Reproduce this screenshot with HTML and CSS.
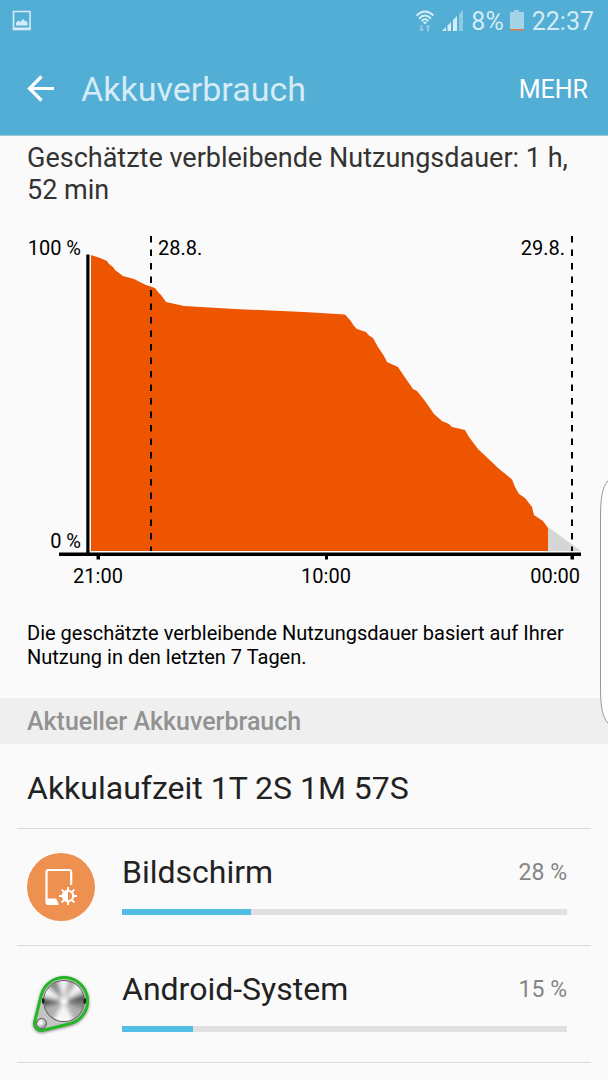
FILE: index.html
```html
<!DOCTYPE html>
<html lang="de">
<head>
<meta charset="utf-8">
<meta name="viewport" content="width=device-width, initial-scale=1">
<title>Akkuverbrauch</title>
<link rel="stylesheet" href="styles.css">
</head>
<body>
<header class="top">
  <div class="status">
    <svg class="status-picture" width="20" height="22" viewBox="0 0 20 22" aria-hidden="true">
      <path fill="none" stroke="#d5ebf5" stroke-width="1.6" d="M1.5 1.5h16.5v18H1.5z"/>
      <path fill="#d5ebf5" d="M1 17.500h17.500v2.500H1zM4 15.500v-2.500l2-2.500 2 1.500 3-3 2.500 2.500 1-.5 1 2v2.500z"/>
    </svg>
    <svg width="20" height="22" viewBox="0 0 20 22" aria-hidden="true">
      <g fill="none" stroke="#d5ebf5" stroke-width="1.9">
        <path d="M1.500 5.500Q10-2.500 18.500 5.500M4 8.500Q10 2.500 16 8.500M6.500 11Q10 7.500 13.500 11"/>
      </g>
      <path fill="#d5ebf5" d="M7.500 11.800h5L10 14.500z"/>
      <path fill="#8ec9e2" d="M5.500 15h2v4h2L6.500 21.500l-3-2.500h2zM12 21.500v-4h-2l3-3 3 3h-2v4z"/>
    </svg>
    <svg class="status-signal" width="22" height="22" viewBox="0 0 22 22" aria-hidden="true">
      <path fill="#8ec9e2" d="M17 4l4-4v21h-4z"/>
      <path fill="#d5ebf5" d="M0 21l4-4v4zM5.500 15.500l3.500-3.500v9H5.500zM11 10l4-4v15h-4z"/>
    </svg>
    <span class="status-text">8%</span>
    <svg class="status-battery" width="14" height="22" viewBox="0 0 14 22" aria-hidden="true">
      <path fill="#a5d4e8" d="M0 2h4V0h5v2h5v18H0z"/>
      <path fill="#e07d4d" d="M0 19h14v1.500H0z"/>
    </svg>
    <span class="status-text">22:37</span>
  </div>
  <div class="bar">
    <button class="back" type="button" aria-label="Zurück">
      <svg width="28" height="28" viewBox="0 0 28 28" aria-hidden="true"><path fill="none" stroke="#fff" stroke-width="3.200" d="M28 13.500H3M15.500 1.500L3.500 13.500l12 12"/></svg>
    </button>
    <h1 class="title">Akkuverbrauch</h1>
    <button class="more" type="button">MEHR</button>
  </div>
</header>
<main>
  <p class="estimate">Geschätzte verbleibende Nutzungsdauer: 1&nbsp;h, 52&nbsp;min</p>
  <svg class="chart" viewBox="0 0 608 380" role="img" aria-label="Akkustand im Zeitverlauf">
    <g transform="translate(0 -220)">
      <path fill="#d6d6d6" d="M548 527L581 551H548z"/>
      <path fill="#ed5500" d="M91 255L100 258L107 261L109 264L113 267L115 270L123 276L134 279L146 285L155 288L158 292L161 295L166 302L184 306L235 309L304 312L345 314.500L350 320L354 326L357 329L366 332L369 335.500L373 338L378 347L384 356L387 362L398 367L404 376L413 389L417 391L425 401L434 414L442 421L449 424L452 427L465 430L469 437L478 449L495 465L498 468L512 479.500L515 487L519 494L525 498L532 507L534 515L543 521L548 528V551H91z"/>
      <path class="day" d="M151 236V551M572 236V551"/>
      <path d="M86.300 254.500H89.500V552.500H581V556H574V559.500H570.500V556H328V559.500H325V556H100V559.500H96.500V556H59V552.500H86.300z"/>
      <text class="end" x="81" y="255">100 %</text>
      <text class="end" x="81" y="548">0 %</text>
      <text x="158" y="255">28.8.</text>
      <text class="end" x="565" y="255">29.8.</text>
      <text class="middle" x="98" y="583">21:00</text>
      <text class="middle" x="326" y="583">10:00</text>
      <text class="end" x="580" y="583">00:00</text>
    </g>
  </svg>
  <p class="note">Die geschätzte verbleibende Nutzungsdauer basiert auf Ihrer Nutzung in den letzten 7 Tagen.</p>
  <h2 class="section">Aktueller Akkuverbrauch</h2>
  <p class="runtime">Akkulaufzeit 1T 2S 1M 57S</p>
  <ul class="apps">
    <li class="app">
      <svg class="icon" width="68" height="68" viewBox="0 0 68 68" aria-hidden="true">
        <circle cx="34" cy="34" r="34" fill="#ed9050"/>
        <path fill="none" stroke="#fff" stroke-width="2.200" d="M44.200 32V19q0-2-2-2H21.500q-2 0-2 2v30q0 2 2 2H31"/>
        <path fill="#fff" d="M19.500 45.500h9.500l3 6H21q-1.500 0-1.500-1.500z"/>
        <g fill="none" stroke="#fff" stroke-width="2">
          <circle cx="41" cy="43" r="5.200"/>
          <path d="M41 34v3M41 49v3M32 43h3M47 43h3M34.600 36.600l2.200 2.200M45.200 47.200l2.200 2.200M34.600 49.400l2.200-2.200M45.200 38.800l2.200-2.200"/>
        </g>
        <path fill="#fff" d="M41 37.500v11a5.500 5.500 0 0 1 0-11z"/>
      </svg>
      <div class="usage">
        <div class="row"><span class="name">Bildschirm</span><span class="percent">28 %</span></div>
        <div class="track"><div class="fill" style="width:29%"></div></div>
      </div>
    </li>
    <li class="app">
      <svg class="icon" width="68" height="68" viewBox="0 0 68 68" aria-hidden="true">
        <defs>
          <linearGradient id="metal" x1="0" y1="0" x2="1" y2="1">
            <stop offset="0" stop-color="#777"/><stop offset=".3" stop-color="#ddd"/><stop offset=".6" stop-color="#bbb"/><stop offset="1" stop-color="#888"/>
          </linearGradient>
          <radialGradient id="fade"><stop offset="0" stop-color="#fff"/><stop offset="1" stop-color="#fff" stop-opacity="0"/></radialGradient>
          <filter id="soft" x="-20%" y="-20%" width="140%" height="140%"><feGaussianBlur stdDeviation="1.500"/></filter>
          <filter id="blend" x="-20%" y="-20%" width="140%" height="140%"><feGaussianBlur stdDeviation="2"/></filter>
          <clipPath id="disc"><circle cx="37" cy="31" r="20"/></clipPath>
        </defs>
        <path fill="#888" stroke="#888" stroke-width="3" filter="url(#soft)" transform="translate(0 1)" d="M14.200 25.400A23.500 23.500 0 1 1 42.600 53.800L16.200 60.300A7 7 0 0 1 7.700 51.800z"/>
        <path fill="#c4c4c4" stroke="#25b525" stroke-width="3" d="M14.200 25.400A23.500 23.500 0 1 1 42.600 53.800L16.200 60.300A7 7 0 0 1 7.700 51.800z"/>
        <circle cx="37" cy="31" r="21" fill="#5c5c5c"/>
        <circle cx="37" cy="31" r="20" fill="#b0b0b0"/>
        <g clip-path="url(#disc)"><g filter="url(#blend)">
          <path fill="#555" d="M37 31L10 28V38zM37 31L64 23V33z"/>
          <path fill="#858585" d="M37 31L64 33V43zM37 31L18 10 26 5z"/>
          <path fill="#f6f6f6" d="M37 31L30 4H42zM37 31L54 6 62 17zM37 31L22 57H50zM37 31L10 24 16 14z"/>
        </g><circle cx="37" cy="31" r="6" fill="url(#fade)"/></g>
        <path fill="#222" d="M15 28.500h2.500v5H15zM56.500 28.500H59v5h-2.500z"/>
        <circle cx="14.500" cy="53.500" r="5" fill="url(#metal)" stroke="#555"/>
        <circle cx="14" cy="53" r="3.500" fill="url(#fade)"/>
      </svg>
      <div class="usage">
        <div class="row"><span class="name">Android-System</span><span class="percent">15 %</span></div>
        <div class="track"><div class="fill" style="width:16%"></div></div>
      </div>
    </li>
  </ul>
</main>
<svg class="edge" width="8" height="248" viewBox="0 0 8 248" aria-hidden="true">
  <path fill="#fdfdfd" stroke="#969696" d="M9 2C3 7 .5 18 .5 38V210C.5 230 3 241 9 246"/>
</svg>
</body>
</html>
```
FILE: styles.css
```css
* { box-sizing: border-box; }
body {
  margin: 0;
  min-height: 100vh;
  position: relative;
  overflow-x: hidden;
  background: #fafafa;
  color: #222;
  font-family: Roboto, "Noto Sans", sans-serif;
}
h1, h2, p, ul { margin: 0; padding: 0; font-weight: 400; }
button { border: 0; padding: 0; background: none; color: #fff; font: inherit; }
svg { display: block; flex: none; }
.top { background: #52aed4; border-bottom: 1px solid #9fc6d6; }
.status {
  display: flex;
  align-items: center;
  height: 42px;
  padding: 0 14px 0 12px;
}
.status-picture { margin-right: auto; }
.status-signal { margin: 0 7px; }
.status-battery { margin: 0 8px 0 6px; }
.status-text { padding-top: 2px; color: #d5ebf5; font-size: 25px; line-height: 40px; }
.bar {
  display: flex;
  align-items: center;
  height: 93px;
  padding: 0 20px 0 26px;
}
.title {
  flex: 1;
  margin-left: 27px;
  color: #d5ebf5;
  font-size: 34px;
  line-height: 40px;
}
.more { padding-top: 2px; font-size: 25px; line-height: 40px; }
.estimate {
  padding: 6px 27px 0;
  color: #333;
  font-size: 27px;
  line-height: 32px;
}
.chart { width: 100%; height: auto; margin-top: 14px; }
.chart text { font-size: 20px; fill: #000; }
.chart .end { text-anchor: end; }
.chart .middle { text-anchor: middle; }
.day { fill: none; stroke: #000; stroke-width: 2; stroke-dasharray: 6.5 7; }
.note {
  padding: 21px 27px 29px;
  color: #000;
  font-size: 20px;
  line-height: 24px;
}
.section {
  padding: 2px 27px 0;
  background: #efefef;
  color: #929292;
  font-size: 25px;
  font-weight: 500;
  line-height: 44px;
}
.runtime { padding: 4px 27px 0; font-size: 32px; line-height: 80px; }
.apps { list-style: none; margin: 0 17px; border-top: 1px solid #dcdcdc; }
.app {
  display: flex;
  align-items: center;
  height: 117px;
  padding: 0 24px 0 10px;
  border-bottom: 1px solid #dcdcdc;
}
.usage { flex: 1; margin-left: 27px; padding-bottom: 8px; }
.row { display: flex; align-items: center; justify-content: space-between; }
.name { font-size: 32px; line-height: 40px; }
.percent { padding-top: 2px; color: #858585; font-size: 23px; line-height: 38px; }
.track { height: 6px; margin-top: 17px; background: #e0e0e0; }
.fill { height: 100%; background: #52bee6; }
.edge { position: absolute; right: 0; top: 478px; }
```
